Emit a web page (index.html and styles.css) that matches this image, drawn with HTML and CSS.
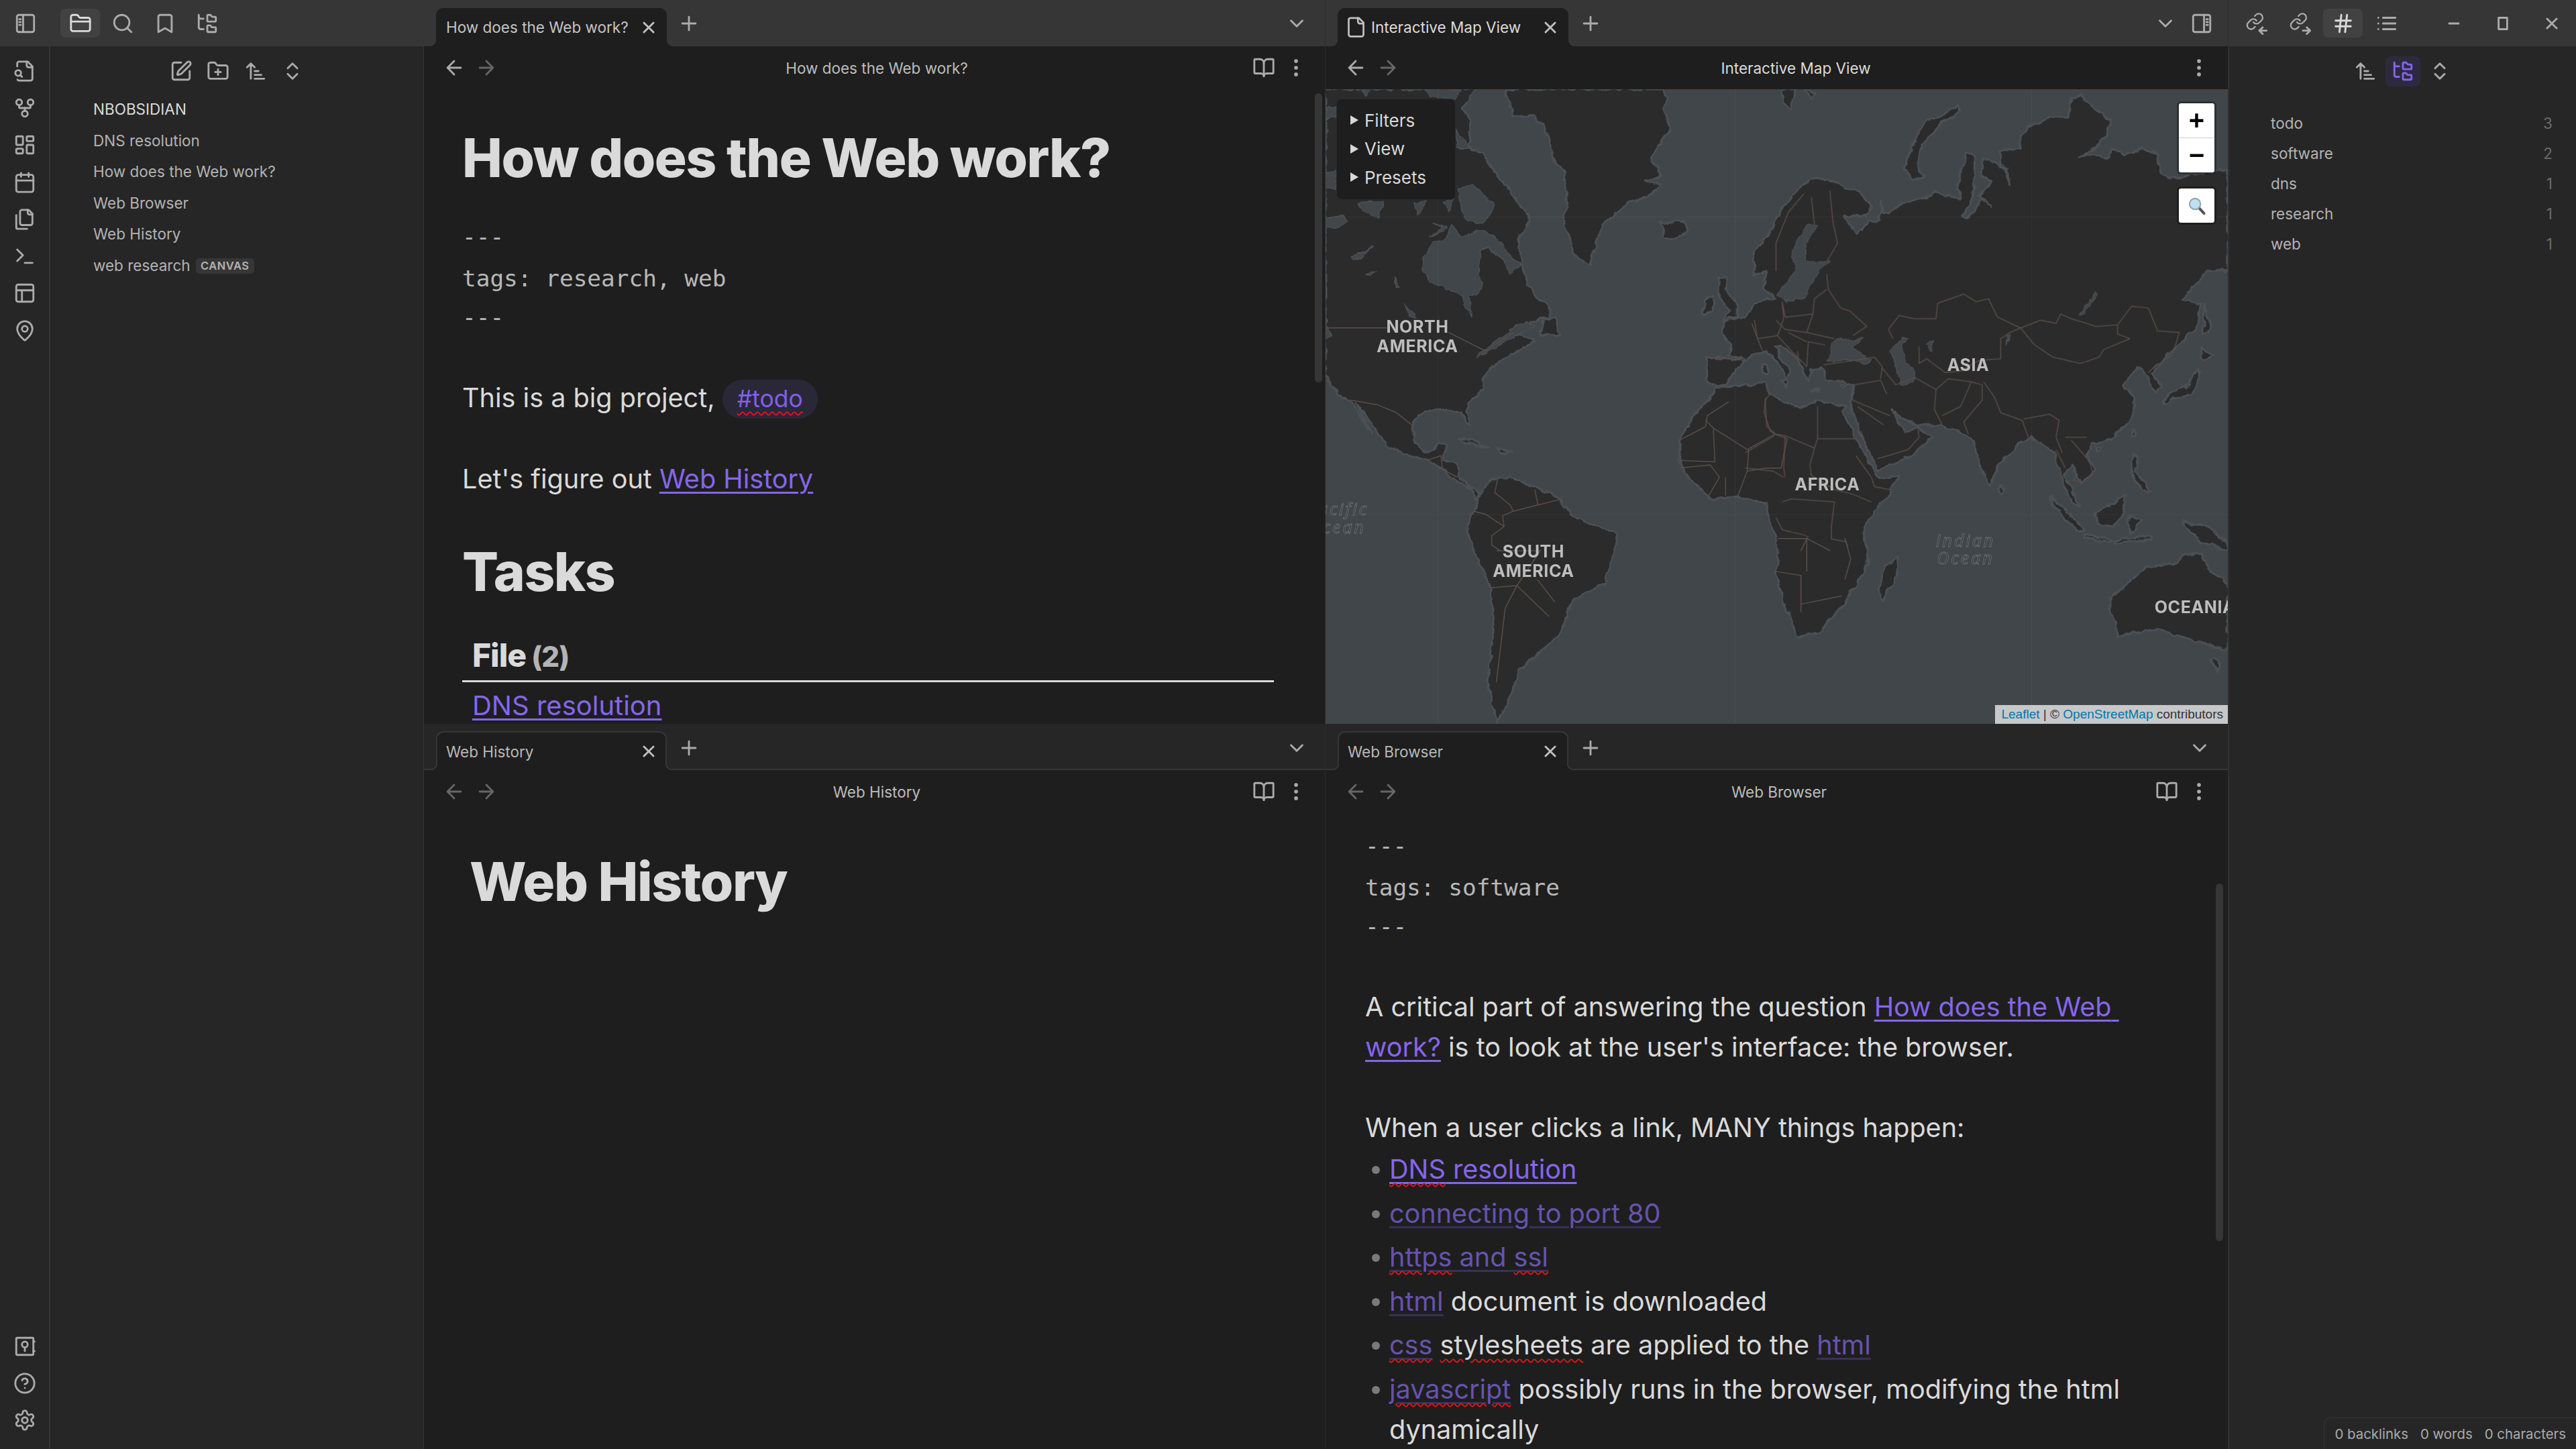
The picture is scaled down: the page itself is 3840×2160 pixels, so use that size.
FILE: index.html
```html
<!DOCTYPE html>
<html lang="en">
<head>
<meta charset="utf-8">
<title>Obsidian</title>
<link rel="stylesheet" href="styles.css">
</head>
<body>
<svg class="sprite" xmlns="http://www.w3.org/2000/svg">
  <defs>
    <filter id="rough" x="-2%" y="-2%" width="104%" height="104%" color-interpolation-filters="sRGB">
      <feTurbulence type="fractalNoise" baseFrequency="0.07" numOctaves="3" seed="4" result="n"/>
      <feDisplacementMap in="SourceGraphic" in2="n" scale="9" xChannelSelector="R" yChannelSelector="G"/>
    </filter>
  </defs>
  <symbol id="i-sl" viewBox="0 0 24 24"><rect x="3" y="3" width="18" height="18" rx="2"/><path d="M9.5 3v18M5.5 7.5h1.5M5.5 10.5h1.5M5.5 13.5h1.5"/></symbol>
  <symbol id="i-sr" viewBox="0 0 24 24"><rect x="3" y="3" width="18" height="18" rx="2"/><path d="M14.5 3v18M17 7.5h1.5M17 10.5h1.5M17 13.5h1.5"/></symbol>
  <symbol id="i-folder" viewBox="0 0 24 24"><path d="M20 20a2 2 0 0 0 2-2V8a2 2 0 0 0-2-2h-7.9a2 2 0 0 1-1.69-.9L9.6 3.9A2 2 0 0 0 7.93 3H4a2 2 0 0 0-2 2v13a2 2 0 0 0 2 2Z"/><path d="M2 10h20"/></symbol>
  <symbol id="i-search" viewBox="0 0 24 24"><circle cx="11" cy="11" r="8"/><path d="m21 21-4.300-4.300"/></symbol>
  <symbol id="i-bookmark" viewBox="0 0 24 24"><path d="m19 21-7-4-7 4V5a2 2 0 0 1 2-2h10a2 2 0 0 1 2 2v16z"/></symbol>
  <symbol id="i-tree" viewBox="0 0 24 24"><path d="M20 10a1 1 0 0 0 1-1V6a1 1 0 0 0-1-1h-2.5a1 1 0 0 1-.8-.4l-.9-1.2A1 1 0 0 0 15 3h-2a1 1 0 0 0-1 1v5a1 1 0 0 0 1 1Z"/><path d="M20 21a1 1 0 0 0 1-1v-3a1 1 0 0 0-1-1h-2.9a1 1 0 0 1-.88-.55l-.42-.85a1 1 0 0 0-.92-.6H13a1 1 0 0 0-1 1v5a1 1 0 0 0 1 1Z"/><path d="M3 5a2 2 0 0 0 2 2h3"/><path d="M3 3v13a2 2 0 0 0 2 2h3"/></symbol>
  <symbol id="i-filesearch" viewBox="0 0 24 24"><path d="M14 2v4a2 2 0 0 0 2 2h4"/><path d="M4.268 21a2 2 0 0 0 1.727 1H18a2 2 0 0 0 2-2V7l-5-5H6a2 2 0 0 0-2 2v3"/><path d="m9 18-1.5-1.5"/><circle cx="5" cy="14" r="3"/></symbol>
  <symbol id="i-fork" viewBox="0 0 24 24"><circle cx="12" cy="18" r="3"/><circle cx="6" cy="6" r="3"/><circle cx="18" cy="6" r="3"/><path d="M18 9v2c0 .6-.4 1-1 1H7c-.6 0-1-.4-1-1V9"/><path d="M12 12v3"/></symbol>
  <symbol id="i-dash" viewBox="0 0 24 24"><rect x="3" y="3" width="7" height="9" rx="1"/><rect x="14" y="3" width="7" height="5" rx="1"/><rect x="14" y="12" width="7" height="9" rx="1"/><rect x="3" y="16" width="7" height="5" rx="1"/></symbol>
  <symbol id="i-cal" viewBox="0 0 24 24"><path d="M8 2v4M16 2v4"/><rect x="3" y="4" width="18" height="18" rx="2"/><path d="M3 10h18"/></symbol>
  <symbol id="i-files" viewBox="0 0 24 24"><path d="M20 7h-3a2 2 0 0 1-2-2V2"/><path d="M9 18a2 2 0 0 1-2-2V4a2 2 0 0 1 2-2h7l4 4v10a2 2 0 0 1-2 2Z"/><path d="M3 7.6v12.8A1.6 1.6 0 0 0 4.6 22h9.8"/></symbol>
  <symbol id="i-term" viewBox="0 0 24 24"><path d="m4 17 6-6-6-6M12 19h8"/></symbol>
  <symbol id="i-layout" viewBox="0 0 24 24"><rect x="3" y="3" width="18" height="18" rx="2"/><path d="M3 9h18M9 21V9"/></symbol>
  <symbol id="i-pin" viewBox="0 0 24 24"><path d="M20 10c0 4.993-5.539 10.193-7.399 11.799a1 1 0 0 1-1.202 0C9.539 20.193 4 14.993 4 10a8 8 0 0 1 16 0"/><circle cx="12" cy="10" r="3"/></symbol>
  <symbol id="i-vault" viewBox="0 0 24 24"><rect x="3" y="3" width="18" height="18" rx="1"/><circle cx="12" cy="10" r="3"/><path d="M12 13v4M21 7h1.200M21 17h1.200"/></symbol>
  <symbol id="i-help" viewBox="0 0 24 24"><circle cx="12" cy="12" r="10"/><path d="M9.090 9a3 3 0 0 1 5.830 1c0 2-3 3-3 3M12 17h.01"/></symbol>
  <symbol id="i-gear" viewBox="0 0 24 24"><path d="M12.22 2h-.44a2 2 0 0 0-2 2v.18a2 2 0 0 1-1 1.73l-.43.25a2 2 0 0 1-2 0l-.15-.08a2 2 0 0 0-2.73.73l-.22.38a2 2 0 0 0 .73 2.73l.15.1a2 2 0 0 1 1 1.72v.51a2 2 0 0 1-1 1.74l-.15.09a2 2 0 0 0-.73 2.73l.22.38a2 2 0 0 0 2.73.73l.15-.08a2 2 0 0 1 2 0l.43.25a2 2 0 0 1 1 1.73V20a2 2 0 0 0 2 2h.44a2 2 0 0 0 2-2v-.18a2 2 0 0 1 1-1.73l.43-.25a2 2 0 0 1 2 0l.15.08a2 2 0 0 0 2.73-.73l.22-.39a2 2 0 0 0-.73-2.73l-.15-.08a2 2 0 0 1-1-1.74v-.5a2 2 0 0 1 1-1.74l.15-.09a2 2 0 0 0 .73-2.73l-.22-.38a2 2 0 0 0-2.73-.73l-.15.08a2 2 0 0 1-2 0l-.43-.25a2 2 0 0 1-1-1.73V4a2 2 0 0 0-2-2z"/><circle cx="12" cy="12" r="3"/></symbol>
  <symbol id="i-edit" viewBox="0 0 24 24"><path d="M12 3H5a2 2 0 0 0-2 2v14a2 2 0 0 0 2 2h14a2 2 0 0 0 2-2v-7"/><path d="M18.375 2.625a1 1 0 0 1 3 3l-9.013 9.014a2 2 0 0 1-.853.505l-2.873.84a.5.5 0 0 1-.62-.62l.84-2.873a2 2 0 0 1 .506-.852z"/></symbol>
  <symbol id="i-newfolder" viewBox="0 0 24 24"><path d="M12 10v6M9 13h6"/><path d="M20 20a2 2 0 0 0 2-2V8a2 2 0 0 0-2-2h-7.9a2 2 0 0 1-1.69-.9L9.6 3.9A2 2 0 0 0 7.93 3H4a2 2 0 0 0-2 2v13a2 2 0 0 0 2 2Z"/></symbol>
  <symbol id="i-sort" viewBox="0 0 24 24"><path d="m3 8 4-4 4 4M7 4v16M11 12h4M11 16h7M11 20h10"/></symbol>
  <symbol id="i-updown" viewBox="0 0 24 24"><path d="m7 15 5 5 5-5M7 9l5-5 5 5"/></symbol>
  <symbol id="i-in" viewBox="0 0 24 24"><g transform="translate(1 0) scale(.82)"><path d="M10 13a5 5 0 0 0 7.54.54l3-3a5 5 0 0 0-7.07-7.07l-1.72 1.71"/><path d="M14 11a5 5 0 0 0-7.54-.54l-3 3a5 5 0 0 0 7.07 7.07l1.71-1.71"/></g><path d="M23 19.500h-7.500M19 16l-3.500 3.500 3.500 3.500"/></symbol>
  <symbol id="i-out" viewBox="0 0 24 24"><g transform="translate(1 0) scale(.82)"><path d="M10 13a5 5 0 0 0 7.54.54l3-3a5 5 0 0 0-7.07-7.07l-1.72 1.71"/><path d="M14 11a5 5 0 0 0-7.54-.54l-3 3a5 5 0 0 0 7.07 7.07l1.71-1.71"/></g><path d="M15.500 19.500h7.500M19.500 16l3.500 3.500-3.500 3.500"/></symbol>
  <symbol id="i-hash" viewBox="0 0 24 24"><path d="M4 9h16M4 15h16M10 3 8 21M16 3l-2 18"/></symbol>
  <symbol id="i-list" viewBox="0 0 24 24"><path d="M8 6h13M8 12h13M8 18h13M3 6h.01M3 12h.01M3 18h.01"/></symbol>
  <symbol id="i-book" viewBox="0 0 24 24"><path d="M12 7v14"/><path d="M3 18a1 1 0 0 1-1-1V4a1 1 0 0 1 1-1h5a4 4 0 0 1 4 4 4 4 0 0 1 4-4h5a1 1 0 0 1 1 1v13a1 1 0 0 1-1 1h-6a3 3 0 0 0-3 3 3 3 0 0 0-3-3z"/></symbol>
  <symbol id="i-more" viewBox="0 0 24 24"><circle cx="12" cy="5" r="1"/><circle cx="12" cy="12" r="1"/><circle cx="12" cy="19" r="1"/></symbol>
  <symbol id="i-left" viewBox="0 0 24 24"><path d="m12 19-7-7 7-7M19 12H5"/></symbol>
  <symbol id="i-right" viewBox="0 0 24 24"><path d="M5 12h14M12 5l7 7-7 7"/></symbol>
  <symbol id="i-x" viewBox="0 0 24 24"><path d="M17 7 7 17M7 7l10 10"/></symbol>
  <symbol id="i-plus" viewBox="0 0 24 24"><path d="M5 12h14M12 5v14"/></symbol>
  <symbol id="i-chev" viewBox="0 0 24 24"><path d="m6 9 6 6 6-6"/></symbol>
  <symbol id="i-file" viewBox="0 0 24 24"><path d="M15 2H6a2 2 0 0 0-2 2v16a2 2 0 0 0 2 2h12a2 2 0 0 0 2-2V7Z"/><path d="M14 2v4a2 2 0 0 0 2 2h4"/></symbol>
  <symbol id="i-min" viewBox="0 0 24 24"><path d="M7 12h10"/></symbol>
  <symbol id="i-max" viewBox="0 0 24 24"><rect x="7.500" y="6" width="9" height="12"/></symbol>
</svg>

<div class="app">
  <aside class="side side-left">
    <div class="strip strip-left">
      <span class="btn toggle"><svg class="ic"><use href="#i-sl"/></svg></span>
      <span class="tbtn on"><svg class="ic"><use href="#i-folder"/></svg></span>
      <span class="tbtn"><svg class="ic"><use href="#i-search"/></svg></span>
      <span class="tbtn"><svg class="ic"><use href="#i-bookmark"/></svg></span>
      <span class="tbtn"><svg class="ic"><use href="#i-tree"/></svg></span>
    </div>
    <div class="side-body">
      <nav class="ribbon">
        <div class="ribbon-group">
          <span class="rbtn"><svg class="ic"><use href="#i-filesearch"/></svg></span>
          <span class="rbtn"><svg class="ic"><use href="#i-fork"/></svg></span>
          <span class="rbtn"><svg class="ic"><use href="#i-dash"/></svg></span>
          <span class="rbtn"><svg class="ic"><use href="#i-cal"/></svg></span>
          <span class="rbtn"><svg class="ic"><use href="#i-files"/></svg></span>
          <span class="rbtn"><svg class="ic"><use href="#i-term"/></svg></span>
          <span class="rbtn"><svg class="ic"><use href="#i-layout"/></svg></span>
          <span class="rbtn"><svg class="ic"><use href="#i-pin"/></svg></span>
        </div>
        <div class="ribbon-group ribbon-bottom">
          <span class="rbtn"><svg class="ic"><use href="#i-vault"/></svg></span>
          <span class="rbtn"><svg class="ic"><use href="#i-help"/></svg></span>
          <span class="rbtn"><svg class="ic"><use href="#i-gear"/></svg></span>
        </div>
      </nav>
      <div class="explorer">
        <div class="nav-row">
          <span class="nbtn"><svg class="ic"><use href="#i-edit"/></svg></span>
          <span class="nbtn"><svg class="ic"><use href="#i-newfolder"/></svg></span>
          <span class="nbtn"><svg class="ic"><use href="#i-sort"/></svg></span>
          <span class="nbtn"><svg class="ic"><use href="#i-updown"/></svg></span>
        </div>
        <ul class="files">
          <li class="vault-name">NBOBSIDIAN</li>
          <li>DNS resolution</li>
          <li>How does the Web work?</li>
          <li>Web Browser</li>
          <li>Web History</li>
          <li>web research <span class="badge">CANVAS</span></li>
        </ul>
      </div>
    </div>
  </aside>

  <section class="pane pane-a">
    <div class="strip tabs">
      <div class="tab"><span class="tab-title">How does the Web work?</span><svg class="ic ic-x"><use href="#i-x"/></svg></div>
      <svg class="ic ic-plus"><use href="#i-plus"/></svg>
      <span class="spacer"></span>
      <svg class="ic ic-chev"><use href="#i-chev"/></svg>
    </div>
    <div class="view-header">
      <span class="hbtn"><svg class="ic"><use href="#i-left"/></svg></span>
      <span class="hbtn dim"><svg class="ic"><use href="#i-right"/></svg></span>
      <span class="view-title">How does the Web work?</span>
      <span class="hbtn"><svg class="ic"><use href="#i-book"/></svg></span>
      <span class="hbtn"><svg class="ic"><use href="#i-more"/></svg></span>
    </div>
    <div class="note note-a">
      <h1>How does the Web work?</h1>
      <div class="yaml yaml-a">---</div>
      <div class="yaml yaml-mid">tags: research, web</div>
      <div class="yaml">---</div>
      <p class="blank"></p>
      <p>This is a big project, <span class="tag"><span class="spell">#todo</span></span></p>
      <p class="blank"></p>
      <p>Let's figure out <a class="lnk">Web History</a></p>
      <h1 class="h-tasks">Tasks</h1>
      <div class="table-head">File<span class="count"> (2)</span></div>
      <div class="table-cell"><a class="lnk">DNS resolution</a></div>
      <span class="scroll scroll-a"></span>
    </div>
  </section>

  <section class="pane pane-b">
    <div class="strip tabs">
      <div class="tab active"><svg class="ic ic-file"><use href="#i-file"/></svg><span class="tab-title">Interactive Map View</span><svg class="ic ic-x"><use href="#i-x"/></svg></div>
      <svg class="ic ic-plus"><use href="#i-plus"/></svg>
      <span class="spacer"></span>
      <svg class="ic ic-chev ic-chev-b"><use href="#i-chev"/></svg>
      <svg class="ic ic-panel"><use href="#i-sr"/></svg>
    </div>
    <div class="view-header">
      <span class="hbtn"><svg class="ic"><use href="#i-left"/></svg></span>
      <span class="hbtn dim"><svg class="ic"><use href="#i-right"/></svg></span>
      <span class="view-title title-active">Interactive Map View</span>
      <span class="hbtn"><svg class="ic"><use href="#i-more"/></svg></span>
    </div>
    <div class="map">
      <svg class="world" viewBox="0 0 1346 946" preserveAspectRatio="none" xmlns="http://www.w3.org/2000/svg">
        <g class="rough">
          <g transform="scale(.4591)" class="land">
            <path d="M0 0H490L470 30 445 60 470 100 470 150 460 190 510 210 540 260 590 315 610 350 660 410 660 430 625 480 630 525 640 580 660 640 690 680 730 710 725 740 660 760 620 800 655 805 680 820 625 850 570 880 530 910 510 950 510 980 465 1020 460 1050 470 1090 455 1080 440 1050 390 1040 320 1045 285 1080 285 1140 320 1175 350 1175 365 1150 395 1150 385 1200 430 1220 430 1260 470 1290 500 1310 490 1335 470 1295 430 1275 380 1235 330 1205 270 1190 210 1165 170 1120 130 1060 100 1020 150 1120 135 1100 90 1020 40 990 0 930Z"/>
            <path d="M590 0L590 20 610 85 680 90 710 120 725 170 745 240 775 270 780 320 785 380 770 420 790 470 800 530 830 555 860 570 880 490 900 440 985 370 1060 340 1090 310 1040 300 1090 280 1060 220 1085 180 1120 130 1100 60 1115 30 1095 0Z"/>
            <path d="M1080 430L1110 435 1165 425 1180 455 1130 490 1095 480 1105 450Z"/>
            <path d="M1280 610L1305 610 1300 650 1330 690 1345 735 1290 750 1315 720 1290 690 1275 650Z"/>
            <path d="M1230 680L1262 675 1260 720 1225 730Z"/>
            <path d="M430 1135L480 1140 530 1165 490 1155 445 1145Z"/>
            <path d="M555 1165L610 1180 570 1182Z"/>
            <path d="M710 745L750 740 760 800 700 795Z"/>
            <path d="M500 1320L540 1265 600 1260 680 1290 760 1330 800 1385 860 1410 950 1440 950 1470 925 1540 907 1605 802 1658 765 1765 707 1818 631 1885 593 1992 555 2058 527 1925 546 1752 536 1618 480 1490 460 1430 480 1370Z"/>
          </g>
          <g transform="translate(626 0) scale(.4591)" class="land">
            <path d="M-128 870L-125 945-98 965-63 960-33 915-5 885 30 860 67 850 97 880 127 920 132 945 147 920 145 905 117 880 100 835 115 830 175 880 190 920 205 950 220 910 250 905 265 945 320 945 350 958 345 1010 345 1040 380 1130 430 1240 470 1220 540 1190 605 1130 560 1100 525 1115 500 1085 480 1040 510 1070 560 1095 575 1085 640 1095 690 1105 720 1130 745 1140 750 1180 795 1290 825 1220 890 1150 930 1130 960 1150 1005 1180 1010 1200 1035 1280 1060 1340 1085 1355 1065 1310 1035 1250 1060 1220 1095 1280 1135 1240 1110 1180 1125 1150 1190 1140 1260 1060 1265 1000 1230 960 1275 900 1310 935 1330 985 1350 965 1325 920 1400 835 1470 770 1480 700 1420 680 1480 620 1500 590 1568 590 1568 260 1440 280 1380 290 1350 270 1340 210 1290 190 1240 210 1190 195 1180 225 1130 210 1090 220 1130 190 1175 150 1185 100 1130 55 1090 20 1060 30 1050 90 1000 90 920 120 895 150 895 190 830 200 830 240 850 260 860 310 840 250 790 230 775 225 770 280 800 300 760 345 800 380 770 350 740 400 715 420 705 410 730 380 745 330 745 220 720 200 690 300 700 360 615 330 610 345 510 370 470 400 445 400 440 365 440 425 400 430 365 470 340 440 320 410 390 410 410 380 370 330 300 310 265 290 210 295 165 330 110 400 70 480 25 530 30 600 70 590 60 650 100 680 70 680 30 700 0 740-70 750-75 795-45 830-55 860-5 878-128 870Z"/>
            <path d="M-98 975L-60 965 7 960 67 955 80 990 140 1020 180 1035 230 1010 335 1030 315 1045 360 1130 420 1240 430 1260 505 1255 470 1310 400 1395 385 1440 400 1540 365 1600 324 1672 238 1765 172 1778 124 1672 102 1568 107 1480 77 1390 67 1345-23 1320-113 1330-188 1260-213 1210-213 1140-173 1070-138 1025Z"/>
            <path d="M494 1518L486 1592 447 1665 432 1625 457 1550Z"/>
            <path d="M1181 1658L1304 1552 1399 1538 1427 1511 1485 1511 1504 1552 1568 1605 1568 1818 1456 1792 1342 1752 1209 1778Z"/>
            <path d="M1514 1852L1543 1856 1533 1892Z"/>
            <path d="M690 55L700 70 640 110 590 160 565 200 560 260 580 290 545 290 520 260 535 200 565 140 590 100 640 90 670 65Z"/>
            <path d="M115 0L165 0 145 65 125 40Z"/>
            <path d="M195 0L225 15 210 30Z"/>
            <path d="M1490 700L1500 730 1510 790 1490 795 1490 750Z"/>
            <path d="M1480 840L1520 860 1495 885 1478 875Z"/>
            <path d="M1470 910L1480 940 1450 990 1390 1005 1360 1025 1355 1010 1380 990 1440 960 1455 920Z"/>
            <path d="M1265 1105L1270 1125 1255 1130Z"/>
            <path d="M1140 1160L1155 1165 1145 1178Z"/>
            <path d="M1260 1180L1275 1200 1265 1240 1300 1280 1315 1310 1285 1300 1255 1240Z"/>
            <path d="M825 1285L840 1300 830 1315 820 1300Z"/>
            <path d="M990 1325L1050 1370 1100 1430 1090 1440 1040 1400 1000 1345Z"/>
            <path d="M1135 1375L1190 1350 1235 1315 1230 1370 1200 1420 1150 1410Z"/>
            <path d="M1245 1390L1290 1395 1265 1430 1250 1440Z"/>
            <path d="M1100 1445L1190 1465 1180 1472 1105 1455Z"/>
            <path d="M1200 1465L1320 1450 1322 1460 1205 1475Z"/>
            <path d="M1420 1400L1500 1420 1568 1470 1568 1500 1480 1470 1440 1430Z"/>
            <path d="M57 895L72 895 72 925 57 925Z"/>
            <path d="M115 948L140 948 135 968Z"/>
            <path d="M310 960L330 958 318 972Z"/>
            <path d="M210 975L245 975 240 982Z"/>
          </g>
        </g>
        <g class="rough">
          <g transform="scale(.4591)" class="sea">
            <path d="M340 505L395 480 410 440 440 480 490 460 540 470 600 540 635 570 600 600 580 560 530 510 500 530 500 600 510 640 490 670 465 670 480 740 450 700 445 670 400 650 340 630 315 590 320 540Z"/>
            <path d="M430 320L480 310 550 380 530 420 490 440 450 420 440 380Z"/>
            <path d="M100 370L190 365 170 420 120 390Z"/>
            <path d="M290 365L330 365 300 410Z"/>
            <path d="M380 365L415 360 400 395Z"/>
            <path d="M0 420L60 410 70 430 30 455 0 440Z"/>
            <path d="M350 435L400 450 340 480 380 450Z"/>
            <path d="M80 545L120 530 160 510 120 545 90 555Z"/>
            <path d="M130 600L170 590 145 605Z"/>
            <path d="M225 610L240 640 230 640Z"/>
            <path d="M260 695L290 745 270 740Z"/>
            <path d="M120 0L150 0 130 25Z"/>
            <path d="M320 0L440 0 420 30 340 25Z"/>
            <path d="M0 60L35 60 35 90 0 95Z"/>
            <path d="M0 270L35 270 35 330 0 320Z"/>
            <path d="M423 130L470 190 425 190Z"/>
            <path d="M0 760L20 800 0 812Z"/>
            <path d="M490 870L600 780 650 755 680 770 620 800 520 860Z"/>
          </g>
          <g transform="translate(626 0) scale(.4591)" class="sea">
            <path d="M200 440L235 445 195 500 195 560 275 560 240 590 210 640 195 680 130 685 105 670 130 640 165 590 150 530Z"/>
            <path d="M265 880L285 825 315 810 345 815 385 805 345 835 410 880 395 895 330 880 290 885Z"/>
            <path d="M470 850L510 810 530 810 505 830 520 890 550 910 545 950 505 958 490 890Z"/>
            <path d="M590 830L615 815 605 850Z"/>
            <path d="M850 800L858 800 845 832Z"/>
            <path d="M1140 660L1085 735 1095 735 1145 668Z"/>
            <path d="M318 1030L350 1060 340 1050Z"/>
          </g>
        </g>
        <g class="borders">
          <g transform="scale(.4591)">
            <path d="M0 775H200M400 790L520 850 610 790M85 1010L170 1025 230 1050 280 1090M330 1205L375 1190 380 1235 430 1260"/>
            <path d="M560 1260L550 1310 600 1350 610 1370 690 1350M680 1300L690 1350 770 1330M480 1370L520 1380 580 1420 540 1450 540 1480 570 1500M580 1420L575 1385 610 1370"/>
            <path d="M1310 1015L1240 1060 1235 1095 1150 1140M1235 1075L1260 1100 1370 1170 1460 1120 1500 1135M1260 1100L1265 1210 1150 1205M1375 1170L1370 1240 1430 1230 1480 1230 1500 1135M1430 1000L1425 1050 1445 1110 1460 1120M1150 1230L1250 1220 1280 1260 1245 1320M1300 1260V1320M1340 1320L1370 1240"/>
            <path d="M1360 880L1240 870M1385 760L1400 800 1420 850"/>
          </g>
          <g transform="translate(626 0) scale(.4591)">
            <path d="M190 340L140 400 100 500 100 590M215 350L225 440M275 330L285 430 300 500 265 560M265 600L270 650 310 710 340 720 395 770 350 800M120 690L130 740 220 730 225 680 265 650M220 730L200 790 290 810M30 750L40 810 105 800 125 745 120 690M100 750L130 780 200 790M105 800L150 850 200 900 205 820 260 830M140 790L200 820M170 850L175 900"/>
            <path d="M255 895L420 870 445 900 440 940M350 960L440 945 460 990M350 1010L470 1060M365 1030L450 1090M430 1200L530 1170 565 1130 560 1095M445 905L490 960 550 935 620 975 615 1040 640 1090M620 975L660 940 735 950 700 1030 640 1060M735 950L770 960 770 1010 710 1080 725 1120M775 950L810 1000 830 1050 900 1075 920 1130M905 1070L990 1055 1020 1075 1010 1130M1010 1130L1030 1180M1040 1130H1110M1010 1170L1040 1230M1060 1140L1120 1210 1130 1250 1095 1275 1060 1270"/>
            <path d="M465 780L500 735 550 745 620 745 625 695 710 665 750 690 790 680 820 740 895 775M465 780L480 810M565 835V890L590 875 650 920 700 915 760 880 830 875 830 810 860 790 895 775"/>
            <path d="M895 775L960 750 1010 760 1025 730 1060 745 1140 770 1210 765 1255 705 1310 710 1340 785 1410 790 1390 860 1320 910M895 775L940 830 1000 870 1090 890 1150 870 1165 845 1250 810 1210 795 1210 765M1310 920L1340 890"/>
            <path d="M235 1030V1135L225 1165 130 1125 100 1120 70 1095 65 1010 80 990M235 1135H360M225 1165L210 1220 215 1250M130 1125L125 1230 130 1260M0 1180L95 1125M0 1230L90 1240 125 1260M210 1250L290 1300 350 1315 410 1340M360 1190L410 1260 420 1290 470 1300M120 1340L150 1330 290 1340 280 1420 280 1460 330 1470M180 1500L205 1450M100 1390L120 1430 200 1450"/>
          </g>
          <g transform="translate(-16 -4) scale(.8737 .6124)">
            <path d="M790 1100H840L880 1130M840 1100V1180M785 1180L830 1190 830 1280M830 1260L900 1240M910 1120L905 1100 915 1150 905 1200"/>
            <path d="M300 1220L345 1215 400 1290M345 1215L325 1270 310 1450M380 1200L410 1255M310 1130L385 1130 345 1215"/>
          </g>
        </g>
        <path class="seams" d="M168 0V946M611 0V946M1053 0V946M0 190.500H1346M0 634H1346"/>
      </svg>
      <span class="mlabel l-na1">NORTH</span>
      <span class="mlabel l-na2">AMERICA</span>
      <span class="mlabel l-asia">ASIA</span>
      <span class="mlabel l-afr">AFRICA</span>
      <span class="mlabel l-sa1">SOUTH</span>
      <span class="mlabel l-sa2">AMERICA</span>
      <span class="mlabel l-oce">OCEANIA</span>
      <span class="mocean l-io1">Indian</span>
      <span class="mocean l-io2">Ocean</span>
      <span class="mocean l-po1">Pacific</span>
      <span class="mocean l-po2">Ocean</span>
      <div class="filters">
        <div class="fitem"><i class="tri"></i>Filters</div>
        <div class="fitem"><i class="tri"></i>View</div>
        <div class="fitem"><i class="tri"></i>Presets</div>
      </div>
      <div class="zoom-ctl">
        <span class="zbtn zplus">+</span>
        <span class="zbtn zminus">&#8722;</span>
      </div>
      <div class="zoom-ctl search-ctl">
        <svg class="mag" viewBox="0 0 24 24"><path d="M14.500 14.500 21 21.500" stroke="#555" stroke-width="3.500" stroke-linecap="round"/><circle cx="9.500" cy="9.500" r="7" fill="#bfe0f2" stroke="#9aa4ac" stroke-width="1.800"/></svg>
      </div>
      <div class="attrib"><a>Leaflet</a> | © <a>OpenStreetMap</a> contributors</div>
    </div>
  </section>

  <aside class="side side-right">
    <div class="strip strip-right">
      <span class="tbtn r"><svg class="ic"><use href="#i-in"/></svg></span>
      <span class="tbtn r"><svg class="ic"><use href="#i-out"/></svg></span>
      <span class="tbtn r on"><svg class="ic"><use href="#i-hash"/></svg></span>
      <span class="tbtn r"><svg class="ic"><use href="#i-list"/></svg></span>
      <span class="wbtn first"><svg class="ic"><use href="#i-min"/></svg></span>
      <span class="wbtn"><svg class="ic"><use href="#i-max"/></svg></span>
      <span class="wbtn"><svg class="ic"><use href="#i-x"/></svg></span>
    </div>
    <div class="nav-row">
      <span class="nbtn"><svg class="ic"><use href="#i-sort"/></svg></span>
      <span class="nbtn accent"><svg class="ic"><use href="#i-tree"/></svg></span>
      <span class="nbtn"><svg class="ic"><use href="#i-updown"/></svg></span>
    </div>
    <ul class="tags">
      <li><span>todo</span><b>3</b></li>
      <li><span>software</span><b>2</b></li>
      <li><span>dns</span><b>1</b></li>
      <li><span>research</span><b>1</b></li>
      <li><span>web</span><b>1</b></li>
    </ul>
    <div class="status"><span>0 backlinks</span><span>0 words</span><span>0 characters</span></div>
  </aside>

  <section class="pane pane-c low">
    <div class="strip tabs">
      <div class="tab"><span class="tab-title">Web History</span><svg class="ic ic-x"><use href="#i-x"/></svg></div>
      <svg class="ic ic-plus"><use href="#i-plus"/></svg>
      <span class="spacer"></span>
      <svg class="ic ic-chev"><use href="#i-chev"/></svg>
    </div>
    <div class="view-header">
      <span class="hbtn dim"><svg class="ic"><use href="#i-left"/></svg></span>
      <span class="hbtn dim"><svg class="ic"><use href="#i-right"/></svg></span>
      <span class="view-title">Web History</span>
      <span class="hbtn"><svg class="ic"><use href="#i-book"/></svg></span>
      <span class="hbtn"><svg class="ic"><use href="#i-more"/></svg></span>
    </div>
    <div class="note note-c">
      <h1>Web History</h1>
    </div>
  </section>

  <section class="pane pane-d low">
    <div class="strip tabs">
      <div class="tab"><span class="tab-title">Web Browser</span><svg class="ic ic-x"><use href="#i-x"/></svg></div>
      <svg class="ic ic-plus"><use href="#i-plus"/></svg>
      <span class="spacer"></span>
      <svg class="ic ic-chev"><use href="#i-chev"/></svg>
    </div>
    <div class="view-header">
      <span class="hbtn dim"><svg class="ic"><use href="#i-left"/></svg></span>
      <span class="hbtn dim"><svg class="ic"><use href="#i-right"/></svg></span>
      <span class="view-title">Web Browser</span>
      <span class="hbtn"><svg class="ic"><use href="#i-book"/></svg></span>
      <span class="hbtn"><svg class="ic"><use href="#i-more"/></svg></span>
    </div>
    <div class="note note-d">
      <div class="yaml">---</div>
      <div class="yaml yaml-mid">tags: software</div>
      <div class="yaml">---</div>
      <p class="blank"></p>
      <p>A critical part of answering the question <a class="lnk">How does the Web work?</a> is to look at the user's interface: the browser.</p>
      <p class="blank"></p>
      <p>When a user clicks a link, MANY things happen:</p>
      <ul class="bul">
        <li><a class="lnk"><span class="spell">DNS</span> resolution</a></li>
        <li><a class="lnk un">connecting to port 80</a></li>
        <li><a class="lnk un"><span class="spell">https</span> and <span class="spell">ssl</span></a></li>
        <li><a class="lnk un">html</a> document is downloaded</li>
        <li><a class="lnk un"><span class="spell">css</span></a> <span class="spell">stylesheets</span> are applied to the <a class="lnk un">html</a></li>
        <li><a class="lnk un"><span class="spell">javascript</span></a> possibly runs in the browser, modifying the html dynamically</li>
      </ul>
      <span class="scroll scroll-d"></span>
    </div>
  </section>
</div>
</body>
</html>
```

FILE: styles.css
```css
* { box-sizing: border-box; }
html, body { margin: 0; padding: 0; width: 3840px; height: 2160px; overflow: hidden; background: #1e1e1e; }
body { font-family: Inter, "Liberation Sans", sans-serif; color: #dadada; }
.sprite { position: absolute; width: 0; height: 0; }
ul { list-style: none; margin: 0; padding: 0; }
p { margin: 0; }

.app {
  display: grid;
  width: 3840px;
  height: 2160px;
  grid-template-columns: 632px 1344px 1346px 518px;
  grid-template-rows: 1079px 1081px;
}
.side-left { grid-column: 1; grid-row: 1 / 3; }
.pane-a { grid-column: 2; grid-row: 1; }
.pane-b { grid-column: 3; grid-row: 1; }
.side-right { grid-column: 4; grid-row: 1 / 3; }
.pane-c { grid-column: 2; grid-row: 2; }
.pane-d { grid-column: 3; grid-row: 2; }

.ic { width: 34px; height: 34px; fill: none; stroke: currentColor; stroke-width: 2; stroke-linecap: round; stroke-linejoin: round; flex: none; display: block; }

/* sidebars */
.side { background: #262626; display: flex; flex-direction: column; position: relative; min-height: 0; }
.side-left { border-right: 1px solid #363636; }
.side-right { border-left: 1px solid #363636; }
.strip { height: 69px; background: #363636; display: flex; align-items: center; flex: none; color: #ababab; }
.strip-left { padding-left: 21px; }
.toggle { margin-right: 35px; }
.tbtn { width: 59px; height: 43px; margin-right: 4px; border-radius: 8px; display: flex; align-items: center; justify-content: center; }
.tbtn.on { background: #424242; color: #dadada; }
.strip-right { padding-left: 11px; }
.tbtn.r { margin-right: 6px; }
.wbtn { width: 73px; display: flex; justify-content: center; }
.wbtn.first { margin-left: 29px; }
.side-body { flex: 1; display: flex; min-height: 0; }
.ribbon { width: 75px; border-right: 2px solid #363636; padding: 9px 0 0; display: flex; flex-direction: column; justify-content: space-between; color: #ababab; }
.rbtn { height: 55.300px; display: flex; align-items: center; justify-content: center; }
.ribbon-bottom { padding-bottom: 15px; }
.explorer { flex: 1; }
.nav-row { height: 71px; padding-top: 3px; display: flex; justify-content: center; align-items: center; gap: 21.500px; color: #ababab; flex: none; }
.nbtn { display: flex; width: 34px; height: 45px; align-items: center; justify-content: center; border-radius: 8px; }
.nbtn.accent { width: 52px; margin: 0 -9px; background: #2d2a3f; color: #8566ea; }
.files { padding-left: 64px; }
.files li { height: 46.500px; line-height: 46.500px; font-size: 22.500px; color: #b3b3b3; white-space: nowrap; }
.files .vault-name { color: #dadada; }
.badge { display: inline-block; height: 23px; line-height: 23px; padding: 0 7px; margin-left: 2px; border-radius: 5px; background: #363636; font-size: 16.500px; font-weight: 600; letter-spacing: .5px; vertical-align: 2px; color: #b3b3b3; }
.tags { padding: 0 35px 0 62px; margin-top: 21px; }
.tags li { display: flex; justify-content: space-between; height: 45px; line-height: 45px; font-size: 22.500px; color: #b3b3b3; }
.tags b { font-weight: 400; font-size: 22.500px; color: #6a6a6a; }
.status { position: absolute; right: 0; bottom: 0; display: flex; gap: 18px; height: 47px; padding: 0 15px; align-items: center; background: #262626; border: 1px solid #363636; border-width: 1px 0 0 1px; border-top-left-radius: 10px; font-size: 20.400px; color: #ababab; white-space: nowrap; }

/* panes */
.pane { display: flex; flex-direction: column; min-width: 0; min-height: 0; overflow: hidden; background: #1e1e1e; border-right: 1px solid #2c2c2c; }
.tabs { padding-left: 18px; align-items: flex-end; position: relative; }
.tab { width: 344px; height: 57px; background: #1e1e1e; border-radius: 11px 11px 0 0; display: flex; align-items: center; padding: 0 10px 0 15px; position: relative; font-size: 22.500px; color: #c4c4c4; flex: none; }
.tab::before, .tab::after { content: ""; position: absolute; bottom: 0; width: 10px; height: 10px; }
.tab::before { left: -10px; background: radial-gradient(circle at 0 0, transparent 10px, #1e1e1e 10.500px); }
.tab::after { right: -10px; background: radial-gradient(circle at 100% 0, transparent 10px, #1e1e1e 10.500px); }
.tab-title { flex: 1; white-space: nowrap; }
.tab.active { color: #dadada; }
.ic-x { width: 34px; height: 34px; color: #c0c0c0; }
.ic-file { width: 33px; height: 33px; color: #c0c0c0; margin-left: -4px; margin-right: 6px; }
.ic-plus { margin: 0 0 17px 16px; color: #ababab; }
.spacer { flex: 1; }
.ic-chev { margin: 0 25px 17px 0; color: #ababab; }
.ic-chev-b { margin-right: 20px; }
.ic-panel { margin: 0 22px 17px 0; color: #ababab; }
.low .tabs { background: #262626; height: 69px; border-bottom: 2px solid #363636; }
.low .tab { height: 58px; margin-bottom: -2px; border: 2px solid #363636; border-bottom: 0; color: #b8b8b8; padding: 0 8px 0 13px; }
.low .tab::before { background: radial-gradient(circle at 0 0, transparent 8px, #363636 8.500px, #363636 10px, #1e1e1e 10.500px); bottom: 0; }
.low .tab::after { background: radial-gradient(circle at 100% 0, transparent 8px, #363636 8.500px, #363636 10px, #1e1e1e 10.500px); bottom: 0; }
.low .ic-plus { margin-bottom: 14px; }
.low .ic-chev { margin-bottom: 14px; }

.view-header { height: 64px; flex: none; display: flex; align-items: center; padding: 0 19px 0 21px; background: #1e1e1e; color: #ababab; }
.hbtn { width: 48px; display: flex; justify-content: center; flex: none; }
.hbtn.dim { color: #666; }
.view-title { flex: 1; text-align: center; font-size: 22.500px; color: #bcbcbc; white-space: nowrap; padding-left: 5px; }
.view-title.title-active { color: #dadada; padding-left: 7px; }

/* notes */
.note { flex: 1; position: relative; overflow: hidden; font-size: 39.600px; line-height: 60px; min-height: 0; }
.note-a { padding: 54px 76px 0 57px; }
.note-c { padding: 54px 76px 0 68px; }
.note-d { padding: 19px 130px 0 59px; }
h1 { margin: 0; font-size: 80px; line-height: 96px; font-weight: 800; letter-spacing: -1.450px; color: #dadada; }
.yaml { font-family: "DejaVu Sans Mono", "Liberation Mono", monospace; font-size: 34.400px; height: 60px; line-height: 60px; color: #b8b8b8; }
.yaml-mid { padding-top: 2px; }
.yaml-a { margin-top: 40px; }
.blank { height: 60px; }
p { white-space: pre-wrap; }
.lnk { color: #8566ea; text-decoration: underline; text-decoration-thickness: 3px; text-underline-offset: 5px; text-decoration-color: #8566ea; }
.lnk.un { color: #6653ae; text-decoration-color: #3a3157; }
.spell { text-decoration: underline wavy #e0141c; text-decoration-thickness: 2px; text-underline-offset: 6px; }
.tag { display: inline-block; height: 58px; line-height: 58px; padding: 0 22px; border-radius: 29px; background: #2a2838; color: #8060e8; font-size: 35.500px; }
.h-tasks { margin-top: 60px; }
.table-head { margin-top: 47px; height: 70px; line-height: 60px; font-size: 48px; font-weight: 800; padding-left: 15px; border-bottom: 3px solid #dadada; letter-spacing: -1px; }
.count { font-size: 42px; color: #b4b4b4; }
.table-cell { padding-left: 15px; height: 70px; line-height: 70px; font-size: 40px; }
.bul { margin-top: 2px; }
.bul li { position: relative; padding: 0 0 5.600px 36px; line-height: 60px; }
.bul li::before { content: ""; position: absolute; left: 10px; top: 25px; width: 12px; height: 12px; border-radius: 50%; background: #7a7a7a; }
.scroll { position: absolute; width: 11px; border-radius: 6px; background: #363636; }
.scroll-a { right: 4px; top: 6px; height: 431px; }
.scroll-d { right: 7px; top: 105px; height: 533px; }

/* map */
.map { flex: 1; position: relative; overflow: hidden; background: #41464a; }
.world { position: absolute; left: 0; top: 0; width: 100%; height: 100%; display: block; }
.rough { filter: url(#rough); }
.land path { fill: #2b2b2b; stroke: #4b5054; stroke-width: 3; vector-effect: non-scaling-stroke; stroke-linejoin: round; }
.sea path { fill: #41464a; stroke: #4b5054; stroke-width: 1.500; vector-effect: non-scaling-stroke; stroke-linejoin: round; }
.borders path { fill: none; stroke: #5a4e4a; stroke-width: 1.500; vector-effect: non-scaling-stroke; stroke-linejoin: round; }
.seams { fill: none; stroke: rgba(255,255,255,.04); stroke-width: 1; vector-effect: non-scaling-stroke; }
.mlabel { position: absolute; transform: translate(-50%, -50%); font-size: 25px; line-height: 1; font-weight: 700; letter-spacing: .6px; color: #bdbdbd; white-space: nowrap; }
.mocean { position: absolute; transform: translate(-50%, -50%); font-family: "Open Sans", Inter, sans-serif; font-style: italic; font-size: 25px; line-height: 1; letter-spacing: 3px; color: #2f3337; -webkit-text-stroke: .8px #74797d; white-space: nowrap; }
.l-na1 { left: 137px; top: 354px; }
.l-na2 { left: 137px; top: 383px; }
.l-asia { left: 958px; top: 411px; }
.l-afr { left: 748px; top: 589px; }
.l-sa1 { left: 310px; top: 689px; }
.l-sa2 { left: 310px; top: 718px; }
.l-oce { left: 1296px; top: 772px; }
.l-io1 { left: 954px; top: 672px; }
.l-io2 { left: 954px; top: 698px; }
.l-po1 { left: 64px; top: 625px; transform: translate(-100%, -50%); }
.l-po2 { left: 60px; top: 652px; transform: translate(-100%, -50%); }
.filters { position: absolute; left: 16px; top: 14px; width: 178px; height: 151px; background: #1e1e1e; border-radius: 8px; border: 1px solid #2a2a2a; padding: 10px 0 0 20px; font-size: 26px; color: #d8d8d8; }
.fitem { display: flex; align-items: center; height: 42.500px; white-space: nowrap; }
.tri { width: 0; height: 0; border-style: solid; border-width: 7px 0 7px 12px; border-color: transparent transparent transparent #d8d8d8; margin-right: 9px; }
.zoom-ctl { position: absolute; right: 17px; top: 18px; width: 53px; box-sizing: content-box; border: 3px solid rgba(0,0,0,.3); border-radius: 6px; background: #fff; background-clip: padding-box; display: flex; flex-direction: column; overflow: hidden; }
.zbtn { height: 51.500px; display: flex; align-items: center; justify-content: center; color: #000; font-family: "Liberation Sans", sans-serif; font-weight: 700; font-size: 40px; line-height: 1; }
.zplus { border-bottom: 1px solid #ccc; }
.search-ctl { top: 145px; height: 51px; align-items: center; justify-content: center; }
.mag { width: 28px; height: 28px; display: block; }
.attrib { position: absolute; right: 0; bottom: 0; height: 28px; line-height: 28px; padding: 0 7px 0 9px; background: #c6c8ca; color: #333; font-family: "Liberation Sans", sans-serif; font-size: 19px; white-space: nowrap; }
.attrib a { color: #0078a8; }
```
